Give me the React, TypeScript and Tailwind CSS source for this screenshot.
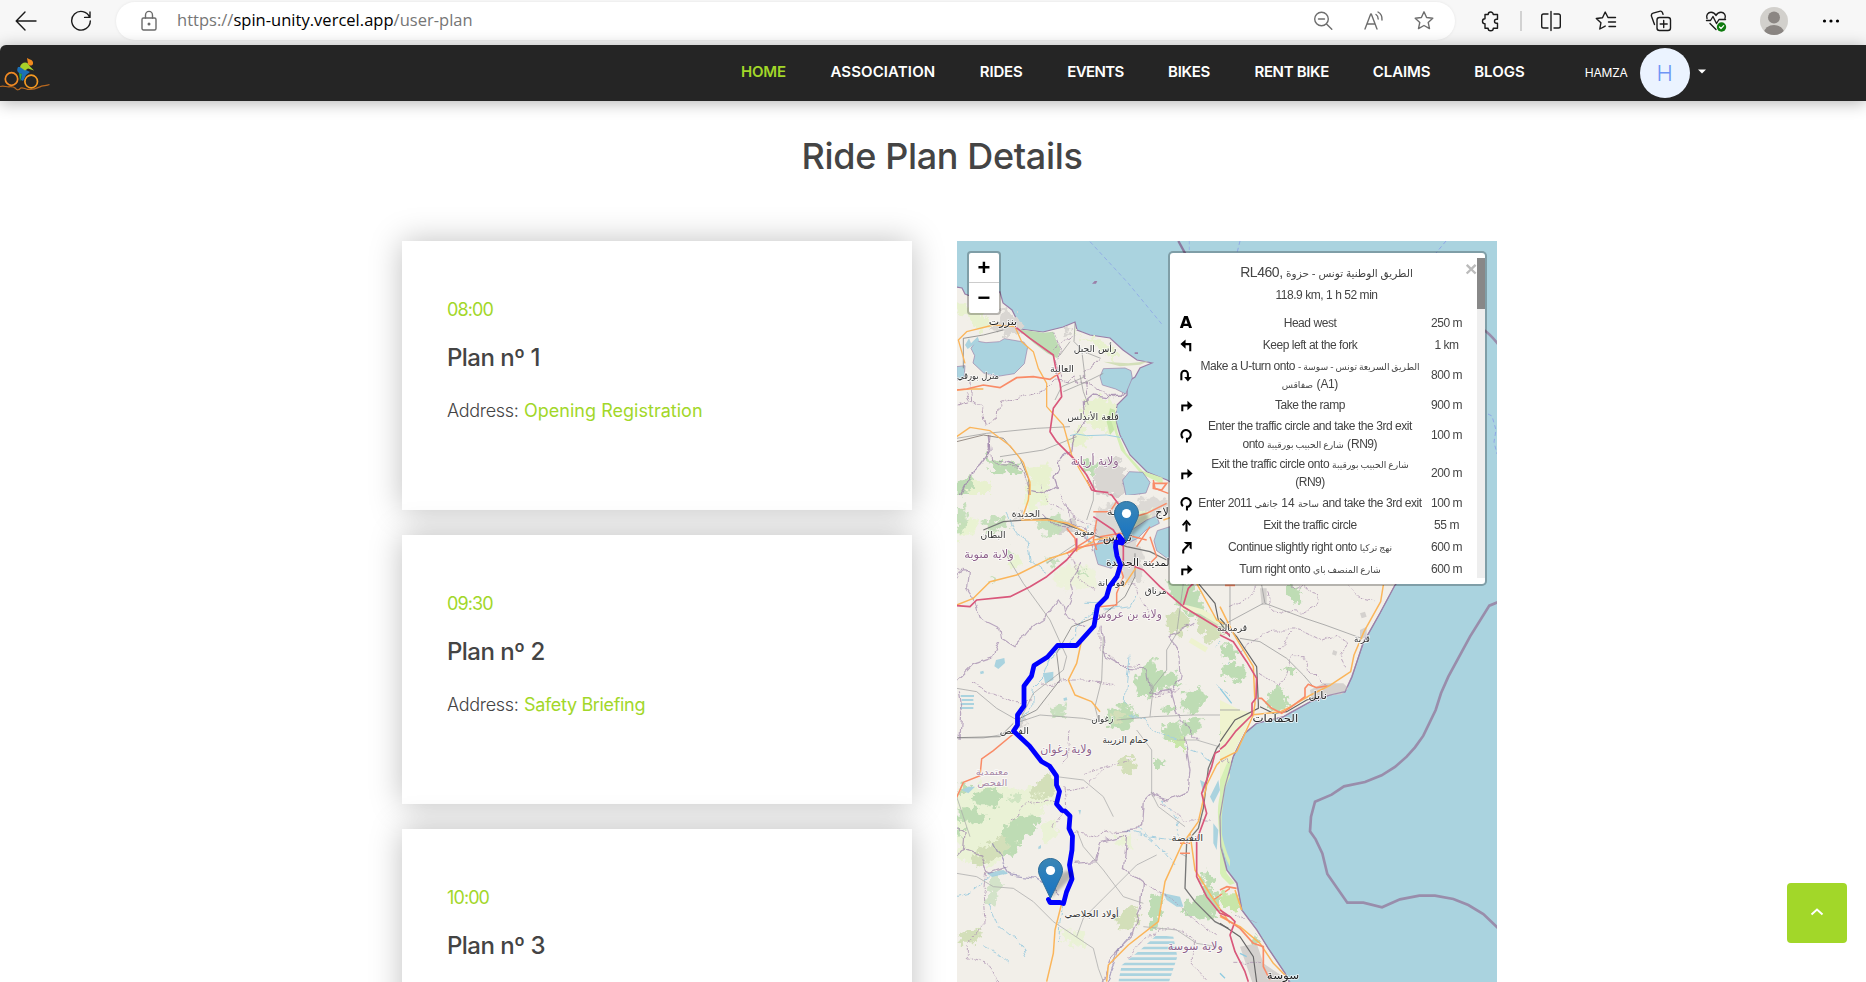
import type { ReactNode } from 'react';

const INTER = "font-['Inter','Open_Sans',sans-serif]";
const ARIAL = "font-['Liberation_Sans','DejaVu_Sans',sans-serif]";

/* ---------- Browser toolbar ---------- */

function Icon({ w, h = 22, children, color = '#1b1b1b' }: { w: number; h?: number; children: ReactNode; color?: string }) {
  return (
    <svg width={w} height={h} viewBox={`0 0 ${w} ${h}`} fill="none" stroke={color} strokeWidth="1.4" strokeLinecap="round" strokeLinejoin="round" className="block shrink-0">
      {children}
    </svg>
  );
}

function BrowserBar() {
  return (
    <div className="flex h-[45px] w-full shrink-0 items-start bg-[#f7f7f7]">
      <div className="flex h-[41px] w-[116px] shrink-0 items-center pl-[15px]">
        <Icon w={22}>
          <path d="M1.5 11H21M10 2 1.2 11 10 20" />
        </Icon>
        <div className="ml-[33px]">
          <Icon w={22}>
            <path d="M19.6 7.2A9.3 9.3 0 1 0 20.3 11M20 2v5.4h-5.4" />
          </Icon>
        </div>
      </div>
      <div className="mt-[2px] flex h-[38px] w-[1339px] shrink-0 items-center rounded-full bg-white pl-[25px] shadow-[0_0_3px_rgba(0,0,0,0.08)]">
        <Icon w={16} color="#6b6b6b">
          <rect x="1" y="8" width="14" height="12" rx="1.5" />
          <path d="M4.5 8V5.2a3.5 3.8 0 0 1 7 0V8" />
          <circle cx="8" cy="14" r=".8" fill="#6b6b6b" />
        </Icon>
        <div className="ml-[20px] w-[900px] whitespace-nowrap pb-px font-['Open_Sans','Noto_Sans',sans-serif] text-[16.500px] tracking-[0.020px] text-[#767676]">
          https://<span className="text-black">spin-unity.vercel.app</span>/user-plan
        </div>
        <div className="ml-auto mr-[21px] flex items-center">
          <Icon w={20} color="#6e6e6e">
            <circle cx="8.5" cy="9" r="6.8" />
            <path d="M5.5 9h6M13.5 14l5.3 5.3" />
          </Icon>
          <div className="ml-[31px]">
            <Icon w={20} color="#6e6e6e">
              <path d="M1 19 6.7 4h.6L13 19M3 14h8M12 4.5c1.5 1 2.2 2.500 2.200 4.500M14 2c2.800 1.500 4.300 4.500 4 8" />
            </Icon>
          </div>
          <div className="ml-[30px]">
            <Icon w={20} color="#6e6e6e">
              <path d="m10 1.800 2.600 5.700 6.200.7-4.600 4.200 1.300 6.200L10 15.500l-5.500 3.100 1.300-6.200L1.200 8.200l6.200-.7z" />
            </Icon>
          </div>
        </div>
      </div>
      <div className="flex h-[41px] grow items-center pl-[25px]">
        <Icon w={20}>
          <path d="M5 4.500h3.200a2.500 2.500 0 0 1 5 0H17.500v4.700h-1a2 2 0 0 0 0 4h1v5h-4.200a2.600 2.600 0 0 1-5.200 0H5v-4.500a2.500 2.500 0 0 1 0-5z" />
        </Icon>
        <div className="ml-[20px] h-[20px] w-[2px] bg-[#d2d2d2]" />
        <div className="ml-[18px]">
          <Icon w={22}>
            <path d="M8 4H3.500A1.800 1.800 0 0 0 1.700 5.800v10.400A1.800 1.800 0 0 0 3.500 18H8M14 4h4.500a1.800 1.800 0 0 1 1.800 1.800v10.400a1.800 1.800 0 0 1-1.800 1.800H14M11 1.500v19" />
          </Icon>
        </div>
        <div className="ml-[33px]">
          <Icon w={22}>
            <path d="M13 7.500 10.200 2 7.500 7.700 1.300 8.500l4.600 4.300-1.100 6.200 5.400-2.900M13 7.500h7.500M13.500 12h7M14 16.500h6.500" />
          </Icon>
        </div>
        <div className="ml-[33px]">
          <Icon w={22}>
            <rect x="7" y="7.500" width="13.500" height="13" rx="2.500" />
            <path d="M13.700 10.500v7M10.200 14h7M4.500 14.500 1.500 6.200a2.500 2.500 0 0 1 1.600-3L9.500 1.300a2.500 2.500 0 0 1 3 1.500l.5 1.500" />
          </Icon>
        </div>
        <div className="ml-[33px]">
          <Icon w={22}>
            <path d="M2 8.500C.8 5 3 2.200 6 2.200c2.200 0 4 1.300 5 3.300 1-2 2.800-3.300 5-3.300 3 0 5.200 2.800 4 6.300M1.500 10.500h4L8 6.500l3.500 7 2.500-4h6.500M5 13.500l6 6" />
            <circle cx="16.500" cy="17" r="4.700" fill="#107c10" stroke="none" />
            <path d="m14.500 17 1.500 1.500 2.700-2.800" stroke="#fff" strokeWidth="1.200" />
          </Icon>
        </div>
        <svg width="28" height="28" viewBox="0 0 28 28" className="ml-[33px] shrink-0">
          <clipPath id="avatar-clip">
            <circle cx="14" cy="14" r="14" />
          </clipPath>
          <g clipPath="url(#avatar-clip)">
            <rect width="28" height="28" fill="#d2d0cc" />
            <circle cx="14" cy="10.500" r="6" fill="#8b8683" />
            <ellipse cx="14" cy="26" rx="10" ry="8" fill="#8b8683" />
          </g>
        </svg>
        <svg width="18" height="6" viewBox="0 0 18 6" className="ml-[34px] shrink-0">
          <circle cx="2.500" cy="3" r="1.600" />
          <circle cx="9" cy="3" r="1.600" />
          <circle cx="15.500" cy="3" r="1.600" />
        </svg>
      </div>
    </div>
  );
}

/* ---------- Site header ---------- */

function Logo() {
  return (
    <svg width="50" height="36" viewBox="0 56 50 36" fill="none" className="mt-[3px] block shrink-0">
      <path d="M0 85.500c4-1 6 .5 9 .3 3-.3 5 .2 6.500 1.500 1.500 2 3.500 2 5-.2 2-1 4 .5 7 1.200 7 1 10-1.500 14-3.200 3-.8 5-.3 8-1.600" stroke="#b8681f" strokeWidth="1.200" />
      <ellipse cx="11.500" cy="78" rx="6.200" ry="6.300" stroke="#f08a24" strokeWidth="1.700" />
      <ellipse cx="31.200" cy="80.500" rx="6.300" ry="6.400" stroke="#f59a22" strokeWidth="1.700" />
      <path d="m19 71 1 9.500 2-7z" fill="#2fae3c" />
      <path d="M18 66c-2 4 0 6 4 7l-1 6 2 1 3-6 4-3-6-3-3-2z" fill="#1b6fb5" />
      <path d="M20 66c1-4 5-5.500 8-3.500l2 3 4 4-6-2-3 2z" fill="#a8d129" />
      <path d="m27 57 3 1.500c2 .3 3.500 2 3 4.500-1 2-3.500 2-5 0z" fill="#f28a1e" />
    </svg>
  );
}

const NAV: [string, string][] = [
  ['HOME', 'w-[44px] text-[#a2d729] tracking-[-0.200px]'],
  ['ASSOCIATION', 'w-[104px] text-white tracking-[0.120px]'],
  ['RIDES', 'w-[42px] text-white tracking-[-0.150px]'],
  ['EVENTS', 'w-[55.500px] text-white tracking-[-0.600px]'],
  ['BIKES', 'w-[41px] text-white tracking-[-0.300px]'],
  ['RENT BIKE', 'w-[73px] text-white tracking-[-0.350px]'],
  ['CLAIMS', 'w-[56px] text-white tracking-[-0.100px]'],
  ['BLOGS', 'w-[50px] text-white tracking-[0px]'],
];

function SiteHeader() {
  return (
    <div className="relative z-10 bg-[#f7f7f7]">
      <header className={`flex h-[56px] items-center rounded-tl-[6px] bg-[#252525] shadow-[0_2px_16px_rgba(0,0,0,0.3)] ${INTER}`}>
        <Logo />
        <nav className="ml-[691px] flex items-center gap-[45.400px] pb-[2px]">
          {NAV.map(([label, cls]) => (
            <a key={label} className={`block whitespace-nowrap text-[15px] font-semibold ${cls}`}>
              {label}
            </a>
          ))}
        </nav>
        <span className="ml-[60.500px] w-[43px] whitespace-nowrap text-[12px] tracking-[-0.200px] text-white">HAMZA</span>
        <span className="ml-[12px] flex size-[50px] items-center justify-center rounded-full bg-[#ebf3ff] text-[22px] font-light text-[#6e95f5]">H</span>
        <svg width="8" height="5" viewBox="0 0 8 5" className="mb-[3px] ml-[8px]">
          <path d="M0 .5h8L4 4.500z" fill="#fff" />
        </svg>
      </header>
    </div>
  );
}

/* ---------- Plans ---------- */

type Plan = { time: string; name: string; address?: string; tracking?: string };

const PLANS: Plan[] = [
  { time: '08:00', name: 'Plan nº 1', address: 'Opening Registration', tracking: 'tracking-[0.020px]' },
  { time: '09:30', name: 'Plan nº 2', address: 'Safety Briefing', tracking: 'tracking-[-0.330px]' },
  { time: '10:00', name: 'Plan nº 3' },
];

function PlanCard({ time, name, address, tracking = '' }: Plan) {
  return (
    <div className="h-[269px] w-[510px] shrink-0 bg-white pl-[45px] pt-[55px] shadow-[0_0_30px_rgba(0,0,0,0.25)]">
      <div className="text-[18px] leading-[27px] tracking-[-0.900px] text-[#a2d729]">{time}</div>
      <div className="mt-[20px] text-[24px] font-medium leading-[30px] tracking-[-0.550px] text-[#444]">{name}</div>
      {address && (
        <div className="mt-[24px] flex gap-[5px] text-[18px] leading-[27px] text-[#444]">
          <span className="w-[72px] whitespace-nowrap font-light tracking-[-0.300px]">Address:</span>
          <span className={`text-[#a2d729] ${tracking}`}>{address}</span>
        </div>
      )}
    </div>
  );
}

/* ---------- Map ---------- */

type LabelDef = [number, number, number, string, string?, number?];

function Labels({ items }: { items: LabelDef[] }) {
  return (
    <>
      {items.map(([x, y, w, text, color = '#222', size = 31], i) => (
        <text key={i} x={x} y={y} textLength={w} lengthAdjust="spacingAndGlyphs" textAnchor="middle" fontSize={size} fill={color} stroke="#ffffff" strokeOpacity=".75" strokeWidth="5" strokeLinejoin="round" paintOrder="stroke">
          {text}
        </text>
      ))}
    </>
  );
}

const PURPLE = '#8d618b';

function Marker({ x, y, id }: { x: number; y: number; id: string }) {
  return (
    <g transform={`translate(${x - 12.5} ${y - 41})`}>
      <path d="M13 40 32 21c5-5 3-9-3-8-5 1-9 5-11 12z" fill="#000" opacity=".25" filter="url(#soft)" />
      <linearGradient id={id} x1="0" y1="0" x2="0" y2="1">
        <stop offset="0" stopColor="#3a86b6" />
        <stop offset="1" stopColor="#1673c4" />
      </linearGradient>
      <path d="M12.500.5C5.800.5.5 5.800.5 12.400c0 2.300.7 4.600 1.800 6.700L12.500 40.500 22.700 19.100c1.100-2.100 1.800-4.400 1.800-6.700C24.500 5.800 19.200.5 12.500.5z" fill={`url(#${id})`} stroke="#2e6c97" strokeWidth="1" />
      <circle cx="12.500" cy="12.500" r="4.600" fill="#fff" />
    </g>
  );
}

const LAND =
  'M950 286 962 288 965 294 970 296 990 293 1000 292 1003 303 1012 310 1017 320 1015 326 1020 329 1043 332 1063 327 1075 322 1077 330 1090 335 1110 338 1123 350 1137 360 1152 363 1140 368 1135 377 1127 382 1127 395 1117 405 1115 418 1120 435 1130 455 1147 472 1167 480 1200 500 1300 500 1420 560 1395 585 1380 613 1363 643 1352 677 1345 692 1330 695 1310 702 1292 712 1283 717 1257 723 1245 733 1233 757 1225 787 1220 817 1221 847 1227 870 1237 883 1242 910 1257 930 1268 948 1285 973 1295 995 950 995z';

function TileNorth() {
  return (
    <g transform="translate(950 235) scale(.33333)" clipPath="url(#tile-north)">
      <g fill="#d9d6d2" filter="url(#rough)">
        <path d="M155 215 195 235 200 262 230 290 180 300 120 285 150 255z" />
        <path d="M455 680 500 670 530 700 515 745 560 775 440 780 430 720z" />
        <path d="m340 285 20-5 8 18-20 8zM450 500l15-5 5 15-18 5z" />
      </g>
      <g fill="#e8f1cf" filter="url(#rough)">
        <path d="m375 275 10 25 75 22 45 30-15 25-55-50-65-35z" />
        <path d="m20 200 60 20 50 50-40 20-30-40-40-10zM400 500l60-15 40 25-15 80-50-10-40-30zM370 590l40-20 0 60-60 10z" />
        <path d="M230 695 310 690 300 740 240 750zM60 730l60 10 10 40H40z" />
      </g>
      <g fill="#bedcb4">
        <path d="m205 283 75 10 30-3 10 30 12 22-10 28-30-15-40-30z" />
        <g filter="url(#rough)">
          <path d="m100 660 50 20 60 10-10 30-70-10zM20 740l40-20 10 25-20 35H20zM385 680l30-10 25 20-10 30-30-10z" />
        </g>
        <path d="m460 380 75 5 60-6-25 10-60 5z" fill="#d3dfb9" />
        <path d="m480 520 15 5 5 50-20 25-10-40z" fill="#c8e6a9" />
      </g>
      <path d="m497 550 30 90 60 70 65 32v-20l-60-20-50-55-25-60-10-50z" fill="#d6efb5" transform="translate(-14 6)" />
      <g fill="#aad3df">
        <path d="m63 340 15-22 30 5 40-3 15-9 58 10 12 15-10 50-30 30-50 8-42-10-32-30 5-22zM20 395l25-3-3 40-22 3zM450 425l10-24 65-2 18 8 4 22-20 48-30-15-40-12zM518 735l20-25 40 2 22 30-12 32-60 8z" stroke="#9a7fa8" strokeWidth="2" />
        <path d="m45 330 12-20 6 15 20-20 5 12-35 25z" />
      </g>
      <g fill="none" stroke="#a68cab" strokeWidth="2.500" strokeDasharray="14 3 4 3" filter="url(#wavy)">
        <path d="M20 510 60 500 45 470M60 440l5 60 30 15 10 60 40-30 10-40 70-20 60-20 30-30 40 5 20-20 10 20 45 10 60 35 30-10" />
        <path d="m310 290 25 60-20 30 15 50M310 340l60-40M410 480l-5-70 45-30M120 600l-5 60 40 35 60 5 20 50 5 30" />
      </g>
      <path d="m530 480-60 2-40-5-30 25 5 60-30 35-10 50-40 30 2 20-15 30 10 30-30 20-45-10M115 600l5 50-30 40-30 30-30 60M150 680l60 15" fill="none" stroke="#9a7fa8" strokeWidth="4" opacity=".75" filter="url(#wavy)" />
      <g fill="none" stroke="#9a9a9a" strokeWidth="2.200">
        <path d="m375 265 -3 55 30 30 50 20M360 320l-30 40M395 345l10 80-70 30-20 40M340 470l70-30 50-25M20 610l90-15 150-15 100-5M150 665l130-20 100-40M390 420l10 50 15 40" />
        <path d="m40 400 0-90 60-10 60-15" stroke="#777" />
        <path d="m20 620 80-20 60 10 50 60 25 60 5 50" stroke="#776b63" />
      </g>
      <g fill="none" stroke="#fbb55a" strokeWidth="4" strokeLinejoin="round">
        <path d="M195 275 130 270 50 290 25 315 35 350 45 385" />
        <path d="m195 275 20 45 35 30 15 50 25 45 0 70 50 55 25 90 25 45 30 50M20 605l40-28 60 10 60 45 40 50 20 60 0 60M20 465l40-3 40 0" />
      </g>
      <path d="m20 465 30-3 50-12 50 8 50-30 50-3 50 8 30-20" fill="none" stroke="#f98b67" strokeWidth="5" />
      <path d="m195 275 45 35 70 50 10 55 10 30 5 40-25 35-10 70 20 30 60 60 30 40 25 48 40 5" fill="none" stroke="#d9577b" strokeWidth="5" strokeLinejoin="round" />
      <path d="m610 745 40 0-15 20-25-5z" fill="none" stroke="#f98b67" strokeWidth="5" />
      <path d="m430 20 115 125 105 128" fill="none" stroke="#8fa7e6" strokeWidth="2.500" strokeDasharray="12 9" transform="translate(-10 0)" />
      <path d="m685 18 22 40" fill="none" stroke="#8c7a9f" strokeWidth="7" />
      <path d="M718 18v36" fill="none" stroke="#8fa7e6" strokeWidth="2" strokeDasharray="10 7" />
      <path d="m426 146 8-8 8 0-4 8zM554 352h10v5h-10z" fill="#9a7fa8" />
      <path d="m360 602 20-5 30 5 60-2 45 8" fill="none" stroke="#9ecfe0" strokeWidth="3" />
      <Labels
        items={[
          [159, 271, 85, 'بنزرت'],
          [435, 351, 128, 'رأس الجبل', '#333', 29],
          [336, 410, 72, 'العالية', '#333', 28],
          [84, 432, 126, 'منزل بورقي', '#333', 28],
          [429, 556, 155, 'قلعة الأندلس', '#333', 28],
          [434, 690, 143, 'ولاية أريانة', PURPLE, 35],
        ]}
      />
    </g>
  );
}

function TileCentre() {
  return (
    <g transform="translate(950 480) scale(.33333)" clipPath="url(#tile-centre)">
      <g fill="#d4d1ce" filter="url(#rough)">
        <path d="m430 100 60-30 60 0 50-20 50 5v30l-60 40-30 60 20 40-10 80-40 0-30-60-60-60z" opacity=".75" />
        <path d="M480 0h30l25 30-20 20-40-10zM330 130l30-20 20 20-10 25-40 5zM190 100l25-5 0 20-25 5zM210 700l25 10-20 40-20-5z" />
      </g>
      <g fill="#e9f3d2" filter="url(#rough)">
        <path d="m230 0 70 0-10 60-60 40zM170 230l30-5 20 30-40 20zM560 100l50-10-20 50-60 20zM20 130l50-20 20 20-40 40-30 10z" />
        <path d="m300 280 70-30 60 20 10 50-60 10-60-10z" opacity=".6" />
      </g>
      <g fill="#bedcb4" filter="url(#rough)">
        <path d="m20 80 35 0-5 60-30 35zM20 20l20-20 0 40zM100 120l70-10 5 30-60 20zM260 130l50-30 30 20-10 40-40 10z" opacity=".85" />
        <path d="m645 300 65 10 30 20 30 70 8 30-60-25-55-55zM555 600l40-60 25-15-5 50 60 0 20 40-70 10-30 30-30-5zM700 640l50-20 20 30-30 50-40 0zM640 680l30-10 10 20-35 10zM470 690l60-20 30 30-20 50-70-10zM700 720l60-10-20 50-50 10zM630 740l60-10 0 50-40 0z" />
        <path d="m290 240 20-10 15 15-20 15zM380 270l15-8 10 20-20 6zM170 215l12-6 8 12-12 5zM120 300l10-5 8 10-12 5zM300 680l40-5 10 25-40 5z" opacity=".8" />
      </g>
      <path d="m650 410 40-20 30 20-20 50-50 0zM740 420l60-15 30 60-60 20zM480 700l30-20 20 30-35 20z" fill="#d3dfb9" filter="url(#rough)" />
      <path d="m695 380 60 15 85 50M720 480l50 30" fill="none" stroke="#eef3cf" strokeWidth="16" />
      <g fill="#aad3df">
        <path d="m512 0 80 0 0 22-22 20-38-12zM432 210l15-28 35-2 12 20 15 40-25 25-40-12zM545 150l45-30 30-12 8 22-40 20-25 25-38 18zM660 140l-38 12-10 30 8 30 38 28z" stroke="#9a7fa8" strokeWidth="2" />
        <path d="m138 540 25-6 2 15-20 18-12-8zM280 580l30-5 0 25-25 10zM90 575l10-3 2 8-10 3zM340 655l10-3 2 8-10 3z" />
        <path d="M32 645h40v6H32zM35 657h35v6H35zM32 669h40v6H32zM30 681h40v6H30z" />
      </g>
      <g fill="none" stroke="#a5cfe0" strokeWidth="3" filter="url(#wavy)">
        <path d="m170 100 30 60 30 20 10 60 50 40M400 370l60 0M440 390l-60 50 0 30-80 60-20 60-30 30-5 60-30 45M540 530l-10 80-5 60M540 700l40 20 50 40 50 20M560 340l-20 40-80 10M410 140l10 50 20 20" />
        <path d="m790 510 20-30M830 560l10-20M800 620l40 30" strokeDasharray="14 8" />
      </g>
      <g fill="none" stroke="#b096b5" strokeWidth="2.500" strokeDasharray="12 4 4 4" filter="url(#wavy)">
        <path d="M60 610l60 30 60 25 60 0M450 440l0 60 60 55 65 5M270 610l100-10 40 0 80 10M360 220l30 80 50 30M500 300l60 20 40 90M600 650l40-10 50-10M20 270l30 0" />
        <path d="m330 50 40 60 60 30 20 40M270 0l20 60 50 30" />
      </g>
      <path d="M20 300l20-35 15 5-5 55 25 40 15 50 60 30 5 30 40 25 40-50 55-40 35-50 15 20 5 25 60 35M340 410l30-65-10-40 30-50M455 440l15 90 60 35 60 5 10 70 70-10 20-40-5-90-25-30 70-40M350 70l15 60 40 20 20 60M280 100l40 40 50 0M600 640l60-10 20 70 60 80M25 640l10 60-5 80M20 600 70 550 130 530 150 490" fill="none" stroke="#9a7fa8" strokeWidth="3.500" opacity=".65" filter="url(#wavy)" />
      <g fill="none" stroke="#a0a0a0" strokeWidth="2.200">
        <path d="m20 625 60 10 60 50 70 40M160 210l60 100 80 110 50 110-10 40-90 70-45 90M430 0v60l-20 60M290 250l90-60M460 470l-5 130-20 80 10 40M700 310l-20 150-30 50 0 60-40 50-10 90M210 725l60-20 130 10 50 10M500 720l110-10 120-5 110 0" />
        <path d="M100 150 160 125 290 115 340 130 430 165 530 200 600 215 650 240" stroke="#777" strokeWidth="3.500" />
        <path d="m555 220 0 70-30 60-60 50-100 40-45 80 10 80-70 90-60 30M190 730 150 770 20 773" stroke="#777" />
        <path d="m745 310 50 60 10 50 35 50" stroke="#666" strokeWidth="3.500" />
      </g>
      <g fill="none" stroke="#fbb55a" strokeWidth="4.500" strokeLinejoin="round">
        <path d="m240 0-5 60-20 60 80 0 60 10 60 30M20 375l50-20 50-50 80-20 100-50 80-25 50-25M395 480l-15 70-25 50 20 45 50 20 25 30M430 180l60-10M560 260l-40 60M640 120l60-20" />
        <path d="m740 310 60 110 40 20" />
      </g>
      <g fill="none" stroke="#f98b67" strokeWidth="4.500" strokeLinejoin="round">
        <path d="m610 0 5 25 40 15M650 70l-60 30-70 20M430 95l50 0 20-30M440 120l-10 60 10 30M350 145l25 30 5 40M375 205l100-20M510 260l10 30-20 50 0 35-50 5M600 170l20 60-20 20M560 200l40-60M450 170l60-10 80 20M350 220l80-50" />
      </g>
      <path d="M20 377 60 380 80 360 150 353 180 350 240 320 290 290 350 240 380 205 380 175M410 0l15 30 60 15 30 40M530 250l50 20 50 50 70 60 140 85M700 375l15-50 20-20M430 110l60 40 30 50 0 60" fill="none" stroke="#d9577b" strokeWidth="5" strokeLinejoin="round" />
      <Labels
        items={[
          [228, 112, 85, 'الجديدة', '#333', 28],
          [129, 173, 75, 'البطان', '#333', 28],
          [403, 166, 62, 'منوبة', '#333', 27],
          [117, 235, 148, 'ولاية منوبة', PURPLE, 34],
          [502, 182, 88, 'تونس', '#222', 36],
          [508, 104, 76, 'أريانة', '#333', 30],
          [636, 108, 40, 'لاج', '#222', 34],
          [568, 258, 200, 'المدينة الجديدة', '#222', 31],
          [484, 318, 82, 'فوشانة', '#333', 28],
          [617, 342, 66, 'مرناق', '#333', 28],
          [533, 415, 205, 'ولاية بن عروس', PURPLE, 34],
          [457, 726, 66, 'زغوان', '#333', 28],
          [193, 762, 88, 'الفحص', '#333', 28],
        ]}
      />
    </g>
  );
}

function TileSouth() {
  return (
    <g transform="translate(950 730) scale(.33333)" clipPath="url(#tile-south)">
      <g fill="#e9f3d2" filter="url(#rough)">
        <path d="m20 180 100-20 100 20 80-40 20 60-60 60-60 90-80 60-100-20zM270 290l40-30 10 60-40 20zM330 590l70 20 10 40-60-10zM490 320l60-10 0 40-60 0z" opacity=".8" />
      </g>
      <g fill="#bedcb4" filter="url(#rough)">
        <path d="m20 160 30-10 10 30-20 10zM70 190l60-15 30 20-20 35-60-10zM20 230l60 5 30 25-25 20-65-10zM160 290l70-35 40 10-10 30-50 40-35 10-20-15zM20 290l25 10-20 20zM170 340l40 0-10 30-40 10zM60 210l20-5 0 20zM615 90l15-5 12 20-12 15-15-10zM690 540l70-60 60 20-20 60-50 15zM600 500l40-10-15 110-30 0zM760 420l30 20-10 60-20-30z" />
        <path d="m650 0 50 10 10 60-20-20-40-20z" fill="#c8e6a9" />
        <path d="m170 210 40-25 0 30zM120 440l30-20 5 40-20 60-30 10z" opacity=".6" />
      </g>
      <g fill="#d3dfb9" filter="url(#rough)">
        <path d="m240 170 60-40 20 10-10 60-60 0zM80 360l70-45 25 10-10 40-70 50-25-10zM505 90l30-15 25 20-15 35-40-10zM505 550l45-20 20 15-15 50-55 0zM25 615l50-20 25 10-20 30-50 5z" />
      </g>
      <path d="M840 130c-30 40-38 90-36 130 2 60 14 110 36 150z" fill="#d6efb5" />
      <g fill="#aad3df">
        <path d="M840 140c-22 45-30 80-30 120 1 40 10 85 30 130z" />
        <path d="m780 200 25-50 5 30-20 40zM790 280l15 20-5 60-10-20zM640 490l50 10 10 30-20 0-30-20zM110 430l50-10 15 10-50 10zM265 350l8-5 0 10-8 3zM385 240l8 0-3 15zM35 180l20-10 20 0-20 20zM750 150l20 10-10 30z" />
      </g>
      <clipPath id="salt-lake">
        <path d="m620 615 50 5 12 60-25 76H505l10-50 60-50z" />
      </clipPath>
      <path d="M500 622h200M500 638h200M500 654h200M500 670h200M500 686h200M500 702h200M500 718h200M500 734h200M500 750h200" stroke="#aad3df" strokeWidth="8" clipPath="url(#salt-lake)" />
      <g fill="none" stroke="#a5cfe0" strokeWidth="3" filter="url(#wavy)">
        <path d="m20 500 40-10 60-50 50-10M120 520l30 70 60 50 20 40M340 520l-10 60-5 60M100 650l40 20 40 35M560 290l60 50 60 70M640 210l40 60 10 60 40-10M700 50l50 20 40 30M530 300l60 20 80 10" strokeDasharray="18 7" />
      </g>
      <g fill="none" stroke="#b096b5" strokeWidth="2.500" strokeDasharray="12 4 4 4" filter="url(#wavy)">
        <path d="M110 430l-10 70 5 80-50 60 0 40 60 20 30 60M180 270l60-50 80-10M400 130l80-20 60-20M350 180l60-10 50-50M310 290l40-60-5-60M500 300l-60 20-90-20M580 460l80 40 60 60 80 60M530 680l60-60 40-20 60 0 40 30 0 80 40 40M640 220l60 50 90 0M360 0l-5 80-20 20" />
      </g>
      <path d="M20 290l25 20-5 50-20 20M45 360l50 15 20 55 60-20M700 0l10 60 10 60-5 60-60 30-40-10-15-10-20 20-5 70-20 20-60 5M525 315l-70 20-15 60-70 5M530 315l-5 60-5 40 60 45-5 60-30 100-60 60-30 75" fill="none" stroke="#9a7fa8" strokeWidth="4" opacity=".65" filter="url(#wavy)" />
      <path d="m130 340 30 60 20 35 80 10 50 30 20 15M545 610l-40 50-15 50-20 46" fill="none" stroke="#8c7fb0" strokeWidth="4" opacity=".65" filter="url(#wavy)" />
      <g fill="none" stroke="#a8a8a8" strokeWidth="2.200">
        <path d="m20 430 60 10 50 30 60 5 60 40 60 60 60 40 60 40 15 60 15 40M560 0l45 60 0 130 20 40 80 60M320 140l80 10 60 50 30 60M380 300l20 50 60 70 60 80 60 20M620 375l-60 30-60 60-40 40-60 60-20 55M580 590l100 10 60 40 60 10M690 370l20 10M20 200l20 60 20 60" />
        <path d="M20 24h80l80-15M840 60l-100-30-60 0" />
        <path d="m840 0-40 55-25 60-15 120-15 60-35 40-5 140 30 40 60 60 40 20" stroke="#777" strokeWidth="4" />
      </g>
      <path d="m190 12-60 50-35 25-5 50-50 20-20 45M690 340h30M690 370h30M790 510l50-35" fill="none" stroke="#f98b67" strokeWidth="4.500" />
      <path d="m335 520-20 80-5 70-20 85M840 65l-40 40-30 60-25 110-50 70-50 110-20 120-90 70-60 60-5 50M720 310l15 110 50 80 55 80" fill="none" stroke="#fbb55a" strokeWidth="4.500" strokeLinejoin="round" />
      <path d="m835 30-10 25-30 15-10 40-30 80 15 60-30 80 0 110 30 60 40 50 30 10" fill="none" stroke="#d9577b" strokeWidth="5" strokeLinejoin="round" />
      <Labels
        items={[
          [526, 40, 137, 'حمام الزريبة', '#333', 28],
          [348, 68, 155, 'ولاية زغوان', PURPLE, 34],
          [126, 134, 98, 'معتمدية', '#a98aa8', 27],
          [127, 168, 90, 'الفحص', '#a98aa8', 27],
          [712, 334, 95, 'النفيضة', '#333', 28],
          [425, 560, 163, 'أولاد الجلاصي', '#333', 28],
          [736, 660, 165, 'ولاية سوسة', PURPLE, 34],
        ]}
      />
    </g>
  );
}

function TileEast() {
  return (
    <g transform="translate(1220 560) scale(.33333)">
      <path d="M0 470 90 460 80 500 40 580 10 690 0 700zM0 420l60 30 40 10-30 50-70 50z" fill="#eff3cf" />
      <path d="M0 660 25 600 35 610 15 680 5 770 5 860 20 940 45 970 30 975 5 950 0 940z" fill="#d6efb5" />
      <g fill="#d4d1ce">
        <path d="m270 390 40-20 60 0 15 15-20 18-60 5-30 10zM120 85l20 0 0 50-15 0zM60 1160l50-10 20 60 60 40 0 26-90 0zM420 210l20-10 0 30-20 10zM420 160l15-5 5 15-15 5zM340 270l12 5-4 12-12-4z" />
      </g>
      <g fill="#bedcb4" filter="url(#rough)">
        <path d="m192 75 45 5 10 45-20 10-30-35zM5 255l30 5 20 20-20 20-30-10zM10 310l30-5 40 30-10 35-60-20zM150 400l30-22 20 30 5 30-40 15-25-20zM190 325l15-8 25 20-20 10zM0 510l10 20-10 10zM90 1140l20-12 10 15-20 10z" />
        <path d="m0 1000 50 0 15 50-30 5-35-25z" fill="#c8e6a9" />
      </g>
      <g fill="none" stroke="#b096b5" strokeWidth="2.500" strokeDasharray="12 4 4 4" filter="url(#wavy)">
        <path d="m30 140 60-30 20-30M140 100l20 50 80 10 60-30-5-35-80-20M60 270l60-40 40-20 80 0 60 30 60-15 20 30-20 30 20 40M175 270l30-40 10-10M120 340l60 40 40-90 30 0 20 40 50 50M380 75l40 40 40 10M45 1060l60 30M0 600l20-10 10 20M40 1210l80 0" />
      </g>
      <path d="M525 75 480 160 430 250 395 350 375 395 330 405 270 425 215 455 190 470 110 490 75 520 40 590 15 680 0 770 2 860 20 930 50 970 65 1050 110 1110 145 1165 195 1240 210 1266" fill="none" stroke="#9a7fa8" strokeWidth="3.500" opacity=".8" />
      <g fill="none" stroke="#a0a0a0" strokeWidth="2.500">
        <path d="M30 75v120M125 75l10 55 120 45 60 20 110 40M0 200l130-70M60 235l60 10 80 50 50 50 30 35M0 450h60" />
        <path d="m0 175 50 55 60 90 5 110 0 15-70 35-45 65M0 1090l60 40 40 60 10 76M120 440l40 20 40-5 60-35 40-10" stroke="#666" strokeWidth="3.500" />
      </g>
      <path d="m0 140 40 80 60 100 5 110-5 35-50 110-50 25M490 75l-8 50-50 90-30 70-10 50-60 40-60 30-60 35-30 15-90 10M0 1070l60 30 60 50 40 60 40 40M45 990l20 60" fill="none" stroke="#fbb55a" strokeWidth="4.500" strokeLinejoin="round" />
      <path d="m0 225 40 20 40 60 30 50-2 60-12 15 0 35-50 50-30 40-16 13M0 1050l30 20 15 15-15 40 15 50 30 60 10 30" fill="none" stroke="#d9577b" strokeWidth="5" strokeLinejoin="round" />
      <path d="m115 415 10 0 30 30 30 15 30-20 40-30 0-25 10-12 25 10 30-5M0 990l20-10 30 5M0 1065l60 40 40 45 30 10 0 60 20 40M15 76h30" fill="none" stroke="#f98b67" strokeWidth="5" strokeLinejoin="round" />
      <path d="m0 385 35 45M0 1240l15 15M60 1180l20 10" fill="none" stroke="#8fcbe0" strokeWidth="4" />
      <path d="M840 124 808 137 750 230 685 350 663 400 647 450 610 527 585 562 560 590 525 621 485 646 435 666 372 679 335 704 285 725 273 770 270 814 287 838 307 880 322 942 382 1028 430 1028 486 1042 540 1018 598 1007 645 1007 700 1017 745 1035 790 1062 840 1110" fill="none" stroke="#998dab" strokeWidth="8" />
      <Labels
        items={[
          [36, 213, 90, 'قرمبالية', '#333', 28],
          [426, 247, 48, 'قربة', '#333', 28],
          [293, 418, 55, 'نابل', '#222', 32],
          [166, 485, 137, 'الحمامات', '#222', 33],
          [189, 1256, 97, 'سوسة', '#222', 33],
        ]}
      />
    </g>
  );
}

const ROUTE =
  'M1123 541 1119 536 1122 543 1116 542 1115.500 547 1117 556 1120.500 565 1117 576.500 1109.500 586.500 1106.500 597 1097.500 606 1094 626 1076.500 645.500 1057.500 645.500 1047.500 657 1034 665.500 1031.500 676 1024 686 1024 706 1017.500 715 1017.500 725 1013.500 731 1029.500 746 1041.500 761.500 1049.500 766 1056.500 776 1056.500 785 1059.500 791.500 1056.500 804 1062 810.500 1065 811 1070 816 1069 828.500 1072.500 836 1072 850 1069.500 865 1072 879 1066.500 892 1063.500 903.500 1060 902.500 1050 902.500 1048.500 899.500';

function MapCanvas() {
  return (
    <svg width="540" height="741" viewBox="957 241 540 741" className="block font-['DejaVu_Sans','Noto_Sans',sans-serif]">
      <defs>
        <filter id="soft">
          <feGaussianBlur stdDeviation="1.5" />
        </filter>
        <filter id="rough">
          <feTurbulence type="fractalNoise" baseFrequency="0.05" numOctaves="3" seed="4" />
          <feDisplacementMap in="SourceGraphic" scale="45" xChannelSelector="R" yChannelSelector="G" />
        </filter>
        <filter id="wavy">
          <feTurbulence type="fractalNoise" baseFrequency="0.025" numOctaves="2" seed="7" />
          <feDisplacementMap in="SourceGraphic" scale="26" xChannelSelector="R" yChannelSelector="G" />
        </filter>
        <clipPath id="tile-north">
          <path d="M0 0h840v780H0z" />
        </clipPath>
        <clipPath id="tile-centre">
          <path d="M0 0h840v780H0z" />
        </clipPath>
        <clipPath id="tile-south">
          <path d="M0 0h840v780H0z" />
        </clipPath>
      </defs>
      <rect x="957" y="241" width="540" height="741" fill="#aad3df" />
      <path d={LAND} fill="#f2efe9" stroke="#9a7fa8" strokeWidth="1.200" />
      <TileSouth />
      <TileCentre />
      <TileNorth />
      <TileEast />
      <path d="M1484 330c6 4 10 9 14 14" fill="none" stroke="#998dab" strokeWidth="2.700" />
      <path d="m1488 414 4 2 4 14-2 12 3 12" fill="none" stroke="#8fa7e6" strokeWidth="1" strokeDasharray="4 3" />
      <path d="m1240 241-3 12M1446 241l-10 12" fill="none" stroke="#8fa7e6" strokeWidth="1" strokeDasharray="4 3" />
      <path d={ROUTE} fill="none" stroke="#0000ff" strokeWidth="4.800" strokeLinecap="round" strokeLinejoin="round" />
      <Marker x={1126.5} y={542} id="pin-a" />
      <Marker x={1050.5} y={899} id="pin-b" />
    </svg>
  );
}

/* ---------- Directions panel ---------- */

const TURNS: Record<string, { line: string; head?: string }> = {
  left: { line: 'M5.500 6.500h6.500V14', head: 'M7 1.500 1.500 6.500 7 11.500z' },
  right: { line: 'M3.500 14V8H10', head: 'm9 3 5.500 5L9 13z' },
  uturn: { line: 'M2.500 13V6.500a3.500 3.500 0 0 1 7 0V11', head: 'M5.500 9.500h8L9.500 14.500z' },
  circle: { line: 'M4.200 10.800A5 5 0 1 1 8.500 12M8.500 10.500v5' },
  up: { line: 'M8 14.500V5', head: 'm3 7.500 5-6 5 6-2 .8-3-3.500-3 3.500z' },
  slight: { line: 'M4.500 14.500V11L10 5', head: 'M5 2h8.500v8l-2.200-1.500V5.500L7.500 4.200z' },
};

function TurnIcon({ kind }: { kind: string }) {
  if (kind === 'start') return <span className="font-['DejaVu_Sans',sans-serif] text-[16px] font-bold leading-[20px] tracking-normal text-black">A</span>;
  const { line, head } = TURNS[kind];
  return (
    <svg width="15" height="15" viewBox="0 0 16 16" className="block">
      <path d={line} fill="none" stroke="#000" strokeWidth="2.200" />
      {head && <path d={head} />}
    </svg>
  );
}

function Ar({ children, cls = 'text-[9.200px] [word-spacing:-1px]' }: { children: ReactNode; cls?: string }) {
  return (
    <bdi dir="rtl" className={`font-['DejaVu_Sans',sans-serif] leading-none tracking-normal ${cls}`}>
      {children}
    </bdi>
  );
}

const STEPS: { kind: string; lines: ReactNode[]; dist: string }[] = [
  { kind: 'start', lines: ['Head west'], dist: '250 m' },
  { kind: 'left', lines: ['Keep left at the fork'], dist: '1 km' },
  { kind: 'uturn', lines: [<>Make a U-turn onto <Ar>الطريق السريعة تونس - سوسة -</Ar></>, <><Ar>صفاقس</Ar> (A1)</>], dist: '800 m' },
  { kind: 'right', lines: ['Take the ramp'], dist: '900 m' },
  { kind: 'circle', lines: ['Enter the traffic circle and take the 3rd exit', <>onto <Ar>شارع الحبيب بورقيبة</Ar> (RN9)</>], dist: '100 m' },
  { kind: 'right', lines: [<>Exit the traffic circle onto <Ar>شارع الحبيب بورقيبة</Ar></>, '(RN9)'], dist: '200 m' },
  { kind: 'circle', lines: [<>Enter 2011 <Ar>جانفي</Ar> 14 <Ar>ساحة</Ar> and take the 3rd exit</>], dist: '100 m' },
  { kind: 'up', lines: ['Exit the traffic circle'], dist: '55 m' },
  { kind: 'slight', lines: [<>Continue slightly right onto <Ar>نهج تركيا</Ar></>], dist: '600 m' },
  { kind: 'right', lines: [<>Turn right onto <Ar>شارع المنصف باي</Ar></>], dist: '600 m' },
];

function DirectionsPanel() {
  return (
    <div className={`absolute left-[211px] top-[10px] flex h-[335px] w-[319px] rounded-[5px] border-2 border-black/25 bg-white bg-clip-padding text-[12px] tracking-[-0.450px] text-[#444] ${ARIAL}`}>
      <div className="w-[307px] pt-[9px]">
        <div className="pl-[6px] text-center">
          <div className="whitespace-nowrap text-[14px] leading-[20px]">
            RL460, <Ar cls="text-[10.500px] [word-spacing:-0.500px]">الطريق الوطنية تونس - حزوة</Ar>
          </div>
          <div className="mt-[4px] leading-[18px]">118.9 km, 1 h 52 min</div>
        </div>
        <div className="mt-[8px]">
          {STEPS.map((s, i) => (
            <div key={i} className="flex min-h-[22px] items-center py-px">
              <div className="flex w-[32px] shrink-0 justify-center">
                <TurnIcon kind={s.kind} />
              </div>
              <div className="flex w-[216px] shrink-0 flex-col items-center">
                {s.lines.map((l, j) => (
                  <div key={j} className="h-[18px] whitespace-nowrap leading-[18px]">
                    {l}
                  </div>
                ))}
              </div>
              <div className="w-[57px] shrink-0 text-center">{s.dist}</div>
            </div>
          ))}
        </div>
      </div>
      <div className="mt-[5px] h-[320px] w-[8px] shrink-0 bg-[#eeeeee]">
        <div className="h-[51px] bg-[#888]" />
      </div>
      <span className="absolute right-[8px] top-[7px] w-[12px] overflow-hidden text-[21px] font-bold leading-[18px] tracking-normal text-[#bbb]">×</span>
    </div>
  );
}

function ZoomControl() {
  return (
    <div className={`absolute left-[10px] top-[10px] flex h-[64px] w-[34px] flex-col rounded-[4px] border-2 border-black/25 bg-white bg-clip-padding text-[22px] font-bold text-black ${ARIAL}`}>
      <button className="flex h-[30px] items-center justify-center border-b border-[#ccc] pt-px leading-none">+</button>
      <button className="flex h-[30px] items-center justify-center leading-none">−</button>
    </div>
  );
}

/* ---------- Page ---------- */

export default function App() {
  return (
    <div className="flex h-[982px] w-[1866px] flex-col overflow-hidden bg-white">
      <BrowserBar />
      <SiteHeader />
      <main className={`relative flex min-h-0 grow flex-col ${INTER}`}>
        <h1 className="pl-[18px] pt-[34px] text-center text-[36px] font-medium leading-[42px] tracking-[-0.350px] text-[#444]">Ride Plan Details</h1>
        <div className="mt-[64px] flex pl-[402px]">
          <div className="flex flex-col gap-[25px]">
            {PLANS.map((p) => (
              <PlanCard key={p.name} {...p} />
            ))}
          </div>
          <div className="relative ml-[45px] h-[741px] w-[540px] overflow-hidden">
            <MapCanvas />
            <ZoomControl />
            <DirectionsPanel />
          </div>
        </div>
        <button className="absolute bottom-[39px] right-[19px] flex size-[60px] items-center justify-center rounded-[4px] bg-[#a2d729]">
          <svg width="14" height="10" viewBox="0 0 14 10" fill="none" stroke="#fff" strokeWidth="2" className="-mt-[2px]">
            <path d="m1.500 7.500 5.500-5 5.500 5" />
          </svg>
        </button>
      </main>
    </div>
  );
}
